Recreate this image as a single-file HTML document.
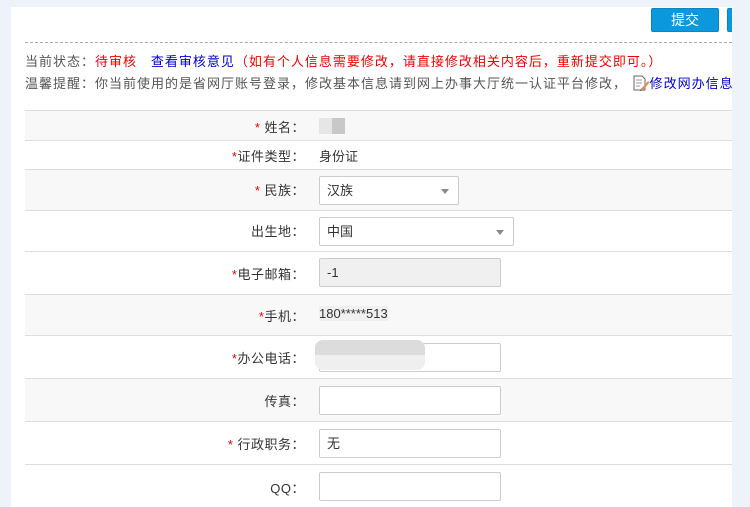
<!DOCTYPE html>
<html><head><meta charset="utf-8"><style>
*{margin:0;padding:0;box-sizing:border-box}
body{width:750px;height:495px;background:#eef2f9;font-family:"Liberation Sans","Noto Sans CJK SC",sans-serif;font-size:13px;color:#333;overflow:hidden;position:relative}
#p{position:absolute;left:11px;top:7px;width:721px;height:500px;background:#fff;overflow:hidden}
.btn{position:absolute;top:1px;height:24px;background:#0b98dd;border:1px solid #0a84c4;border-radius:2px;color:#fff;font-size:14px;text-align:center;line-height:22px}
.dash{position:absolute;left:14px;right:0;top:35px;border-top:1px dashed #aaa}
.t{position:absolute;left:14px;white-space:nowrap;color:#555;letter-spacing:1px;font-size:13px}
.red{color:#e00}.blue{color:#00c}
.row{position:absolute;left:14px;right:0;border-top:1px solid #ddd}
.g{background:#f8f8f8}
.lab{position:absolute;left:80px;width:200px;text-align:right;color:#333;letter-spacing:0.5px}
.lab b{color:#e00;font-weight:normal}
.val{position:absolute;left:294px}
.in{position:absolute;left:294px;height:29px;border:1px solid #ccc;background:#fff;border-radius:2px;padding-left:7px;line-height:27px}
.arr{position:absolute;right:9px;top:12px;border-left:4px solid transparent;border-right:4px solid transparent;border-top:5px solid #888}
</style></head><body>
<div id="p">
<div class="btn" style="left:640px;width:68px">提交</div>
<div class="btn" style="left:716px;width:40px"></div>
<div class="dash"></div>
<div class="t" style="top:44px">当前状态：<span class="red">待审核</span>&nbsp;&nbsp; <span class="blue">查看审核意见</span><span class="red">（如有个人信息需要修改，请直接修改相关内容后，重新提交即可。）</span></div>
<div class="t" style="top:66px">温馨提醒：你当前使用的是省网厅账号登录，修改基本信息请到网上办事大厅统一认证平台修改， <svg width="18" height="16" viewBox="0 0 18 16" style="vertical-align:-3px"><path d="M2 1h8l3 3v11H2z" fill="#fff" stroke="#666"/><path d="M4 5h6M4 8h6M4 11h4" stroke="#999"/><path d="M9 14l7-8 1.5 1.5-7 8z" fill="#e84"/><path d="M9 14l-1 2 2-.5" fill="#33c"/></svg><span class="blue">修改网办信息</span></div>

<div class="row g" style="top:103px;height:30px"><div class="lab" style="top:6px"><b>* </b>姓名：</div><div class="val" style="top:7px;width:26px;height:16px;background:linear-gradient(90deg,#e6e6e6 50%,#c8c8c8 50%)"></div></div>
<div class="row" style="top:133px;height:29px"><div class="lab" style="top:5px"><b>*</b>证件类型：</div><div class="val" style="top:5px">身份证</div></div>
<div class="row g" style="top:162px;height:41px"><div class="lab" style="top:10px"><b>* </b>民族：</div><div class="in" style="top:6px;width:140px">汉族<span class="arr"></span></div></div>
<div class="row" style="top:203px;height:41px"><div class="lab" style="top:10px">出生地：</div><div class="in" style="top:6px;width:195px">中国<span class="arr"></span></div></div>
<div class="row" style="top:244px;height:43px"><div class="lab" style="top:12px"><b>*</b>电子邮箱：</div><div class="in" style="top:6px;width:182px;background:#f0f0f0">-1</div></div>
<div class="row g" style="top:287px;height:41px"><div class="lab" style="top:11px"><b>*</b>手机：</div><div class="val" style="top:11px;background:#f0f0f0">180*****513</div></div>
<div class="row" style="top:328px;height:43px"><div class="lab" style="top:12px"><b>*</b>办公电话：</div><div class="in" style="top:7px;width:182px"></div><div class="val" style="left:290px;top:4px;width:110px;height:30px;background:linear-gradient(#dcdcdc 50%,#efefef 50%);border-radius:8px"></div></div>
<div class="row g" style="top:371px;height:43px"><div class="lab" style="top:12px">传真：</div><div class="in" style="top:7px;width:182px"></div></div>
<div class="row" style="top:414px;height:43px"><div class="lab" style="top:12px"><b>* </b>行政职务：</div><div class="in" style="top:7px;width:182px">无</div></div>
<div class="row" style="top:457px;height:43px"><div class="lab" style="top:13px">QQ：</div><div class="in" style="top:7px;width:182px"></div></div>
</div>
</body></html>
